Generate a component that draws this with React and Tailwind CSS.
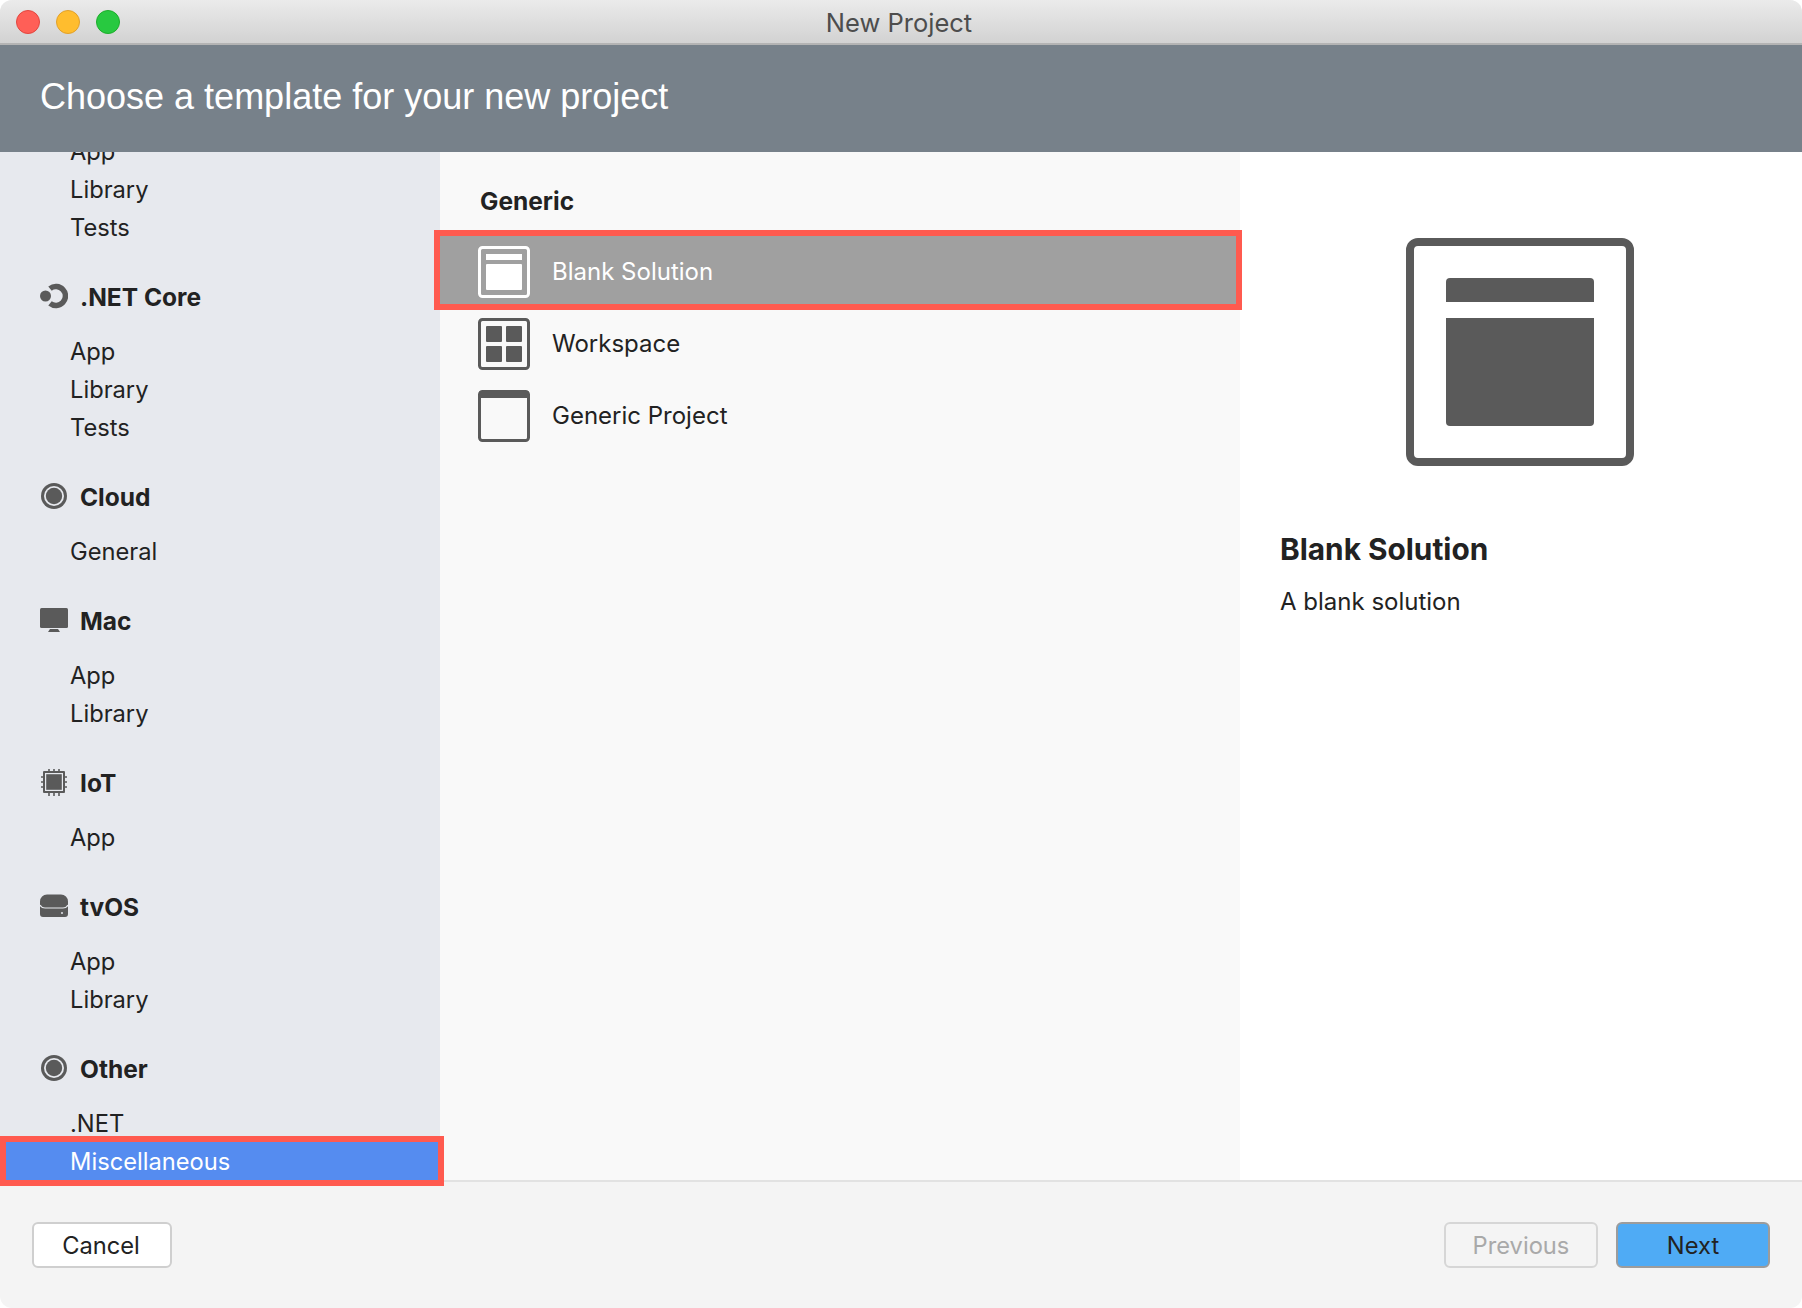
const NetIcon = () => (
  <svg width="28" height="28" viewBox="0 0 28 28" fill="none">
    <circle cx="5.500" cy="13" r="5.500" fill="#5a5a5a" />
    <path d="M10 5.600 A9.500 9.500 0 1 1 10 20.400" stroke="#5a5a5a" strokeWidth="5.500" />
  </svg>
);

const RingIcon = () => (
  <svg width="28" height="28" viewBox="0 0 28 28">
    <circle cx="14" cy="13" r="13" fill="#5a5a5a" />
    <circle cx="14" cy="13" r="10" fill="#e7e9ee" />
    <circle cx="14" cy="13" r="8.200" fill="#5a5a5a" />
  </svg>
);

const MacIcon = () => (
  <svg width="28" height="28" viewBox="0 0 28 28">
    <rect x="0" y="1" width="28" height="20" rx="1.5" fill="#5a5a5a" />
    <path d="M10 22h8l2 3H8z" fill="#5a5a5a" />
  </svg>
);

const ChipIcon = () => (
  <svg width="28" height="28" viewBox="0 0 28 28">
    <g stroke="#5a5a5a" strokeWidth="1.6">
      <path d="M9 0v5M14 0v5M19 0v5M9 21v6M14 21v6M19 21v6M1 8h5M1 13h5M1 18h5M22 8h5M22 13h5M22 18h5" />
    </g>
    <rect x="3" y="2" width="22" height="22" rx="1" fill="#5a5a5a" />
    <rect x="5.600" y="4.600" width="16.800" height="16.800" fill="#5a5a5a" stroke="#e7e9ee" strokeWidth="1.2" />
  </svg>
);

const TvIcon = () => (
  <svg width="28" height="28" viewBox="0 0 28 28">
    <path d="M7 1.500h14a7 7 0 0 1 7 7V21a3 3 0 0 1-3 3H3a3 3 0 0 1-3-3V8.500a7 7 0 0 1 7-7z" fill="#5a5a5a" />
    <path d="M0 12c1 2 2.500 3 5 3h18c2.500 0 4-1 5-3" stroke="#e7e9ee" strokeWidth="1.200" fill="none" />
    <circle cx="22" cy="20" r="1" fill="#e7e9ee" />
  </svg>
);

const groups = [
  { items: ["App", "Library", "Tests"] },
  { name: ".NET Core", icon: <NetIcon />, items: ["App", "Library", "Tests"] },
  { name: "Cloud", icon: <RingIcon />, items: ["General"] },
  { name: "Mac", icon: <MacIcon />, items: ["App", "Library"] },
  { name: "IoT", icon: <ChipIcon />, items: ["App"] },
  { name: "tvOS", icon: <TvIcon />, items: ["App", "Library"] },
  { name: "Other", icon: <RingIcon />, items: [".NET", "Miscellaneous"] },
];

function Sidebar() {
  return (
    <div className="w-[440px] shrink-0 bg-[#e7e9ee] text-[#222]">
      <div className="-mt-[20px] flex flex-col gap-[32px]">
        {groups.map((g, i) => (
          <div key={i}>
            {g.name && (
              <div className="mb-[16px] flex h-[38px] items-center pl-[40px]">
                <span className="mr-[12px] flex w-[28px] justify-center">{g.icon}</span>
                <span className="text-[24.500px] font-bold">{g.name}</span>
              </div>
            )}
            {g.items.map((item) =>
              item === "Miscellaneous" ? (
                <div key={item} className="relative flex h-[38px] items-center bg-[#558cf0] pl-[70px] pt-[2px] text-white">
                  {item}
                  <div className="absolute -top-[6px] -bottom-[6px] left-0 -right-[4px] z-20 border-[6px] border-[#ff5a4f]" />
                </div>
              ) : (
                <div key={item} className="flex h-[38px] items-center pl-[70px] pt-[2px]">
                  {item}
                </div>
              )
            )}
          </div>
        ))}
      </div>
    </div>
  );
}

function TemplateRow({ name, selected, children }) {
  return (
    <div className={`relative flex h-[72px] items-center pl-[38px] ${selected ? "bg-[#a0a0a0] text-white" : "text-[#222]"}`}>
      {children}
      <span className="ml-[22px] text-[24px]">{name}</span>
      {selected && (
        <div className="absolute -top-[6px] -bottom-[2px] -left-[6px] -right-[2px] border-[6px] border-[#ff5a4f]" />
      )}
    </div>
  );
}

const BlankIcon = ({ color }) => (
  <svg width="52" height="52" viewBox="0 0 52 52">
    <rect x="1.500" y="1.500" width="49" height="49" rx="3" fill="none" stroke={color} strokeWidth="3" />
    <rect x="8" y="8" width="36" height="6" fill={color} />
    <rect x="8" y="18" width="36" height="26" rx="1" fill={color} />
  </svg>
);

const WorkspaceIcon = () => (
  <svg width="52" height="52" viewBox="0 0 52 52" fill="#5a5a5a">
    <rect x="1.500" y="1.500" width="49" height="49" rx="3" fill="none" stroke="#5a5a5a" strokeWidth="3" />
    <rect x="8" y="8" width="16" height="16" rx="1" />
    <rect x="28" y="8" width="16" height="16" rx="1" />
    <rect x="8" y="28" width="16" height="16" rx="1" />
    <rect x="28" y="28" width="16" height="16" rx="1" />
  </svg>
);

const GenericIcon = () => (
  <svg width="52" height="52" viewBox="0 0 52 52">
    <rect x="1.500" y="1.500" width="49" height="49" rx="3" fill="none" stroke="#5a5a5a" strokeWidth="3" />
    <rect x="1" y="1" width="50" height="7" rx="2" fill="#5a5a5a" />
  </svg>
);

export default function App() {
  return (
    <div className="relative flex h-[1308px] w-[1802px] flex-col overflow-hidden rounded-[12px] bg-[#f4f4f4] font-['Inter',sans-serif] text-[23.700px]">
      <div className="relative z-10 flex h-[45px] shrink-0 items-center border-b-2 border-[#b4b4b4] bg-gradient-to-b from-[#ebebeb] to-[#d2d2d2] pl-[16px]">
        <div className="flex gap-[16px]">
          <span className="h-[24px] w-[24px] rounded-full border border-[#e2463f] bg-[#ff5f57]" />
          <span className="h-[24px] w-[24px] rounded-full border border-[#e1a02a] bg-[#ffbd2e]" />
          <span className="h-[24px] w-[24px] rounded-full border border-[#1dad2b] bg-[#28c940]" />
        </div>
        <div className="flex-1 pr-[124px] pt-[4px] text-center text-[25.500px] text-[#4d4d4d]">New Project</div>
      </div>
      <div className="relative z-10 flex h-[107px] shrink-0 items-center bg-[#77818a] pb-[4px] pl-[40px] font-['Liberation_Sans',sans-serif] text-[36px] text-white">
        Choose a template for your new project
      </div>
      <div className="flex h-[1030px] shrink-0 border-b-2 border-[#e2e2e2]">
        <Sidebar />
        <div className="w-[800px] shrink-0 bg-[#f9f9f9]">
          <div className="flex h-[84px] items-center pl-[40px] pt-[14px] text-[24.500px] font-bold text-[#222]">Generic</div>
          <TemplateRow name="Blank Solution" selected>
            <BlankIcon color="#ffffff" />
          </TemplateRow>
          <TemplateRow name="Workspace">
            <WorkspaceIcon />
          </TemplateRow>
          <TemplateRow name="Generic Project">
            <GenericIcon />
          </TemplateRow>
        </div>
        <div className="flex-1 bg-white pl-[40px] pt-[86px] text-[#222]">
          <svg className="ml-[126px]" width="228" height="228" viewBox="0 0 228 228">
            <rect x="4" y="4" width="220" height="220" rx="8" fill="none" stroke="#5a5a5a" strokeWidth="8" />
            <path d="M40 44a4 4 0 0 1 4-4h140a4 4 0 0 1 4 4v20H40z" fill="#5a5a5a" />
            <path d="M40 80h148v104a4 4 0 0 1-4 4H44a4 4 0 0 1-4-4z" fill="#5a5a5a" />
          </svg>
          <div className="mt-[61px] text-[29.800px] font-bold">Blank Solution</div>
          <div className="mt-[12px] text-[24px]">A blank solution</div>
        </div>
      </div>
      <div className="flex flex-1 items-center justify-between px-[32px] text-[#222]">
        <button className="h-[46px] w-[140px] rounded-[6px] border-2 border-[#cfcfcf] bg-white pr-[2px] pt-[2px]">Cancel</button>
        <div className="flex gap-[18px]">
          <button className="h-[46px] w-[154px] rounded-[6px] border-2 border-[#d6d6d6] pt-[2px] text-[#a9a9a9]">Previous</button>
          <button className="h-[46px] w-[154px] rounded-[6px] border-2 border-[#9c9c9c] bg-[#4fabf5] pt-[2px]">Next</button>
        </div>
      </div>
    </div>
  );
}
